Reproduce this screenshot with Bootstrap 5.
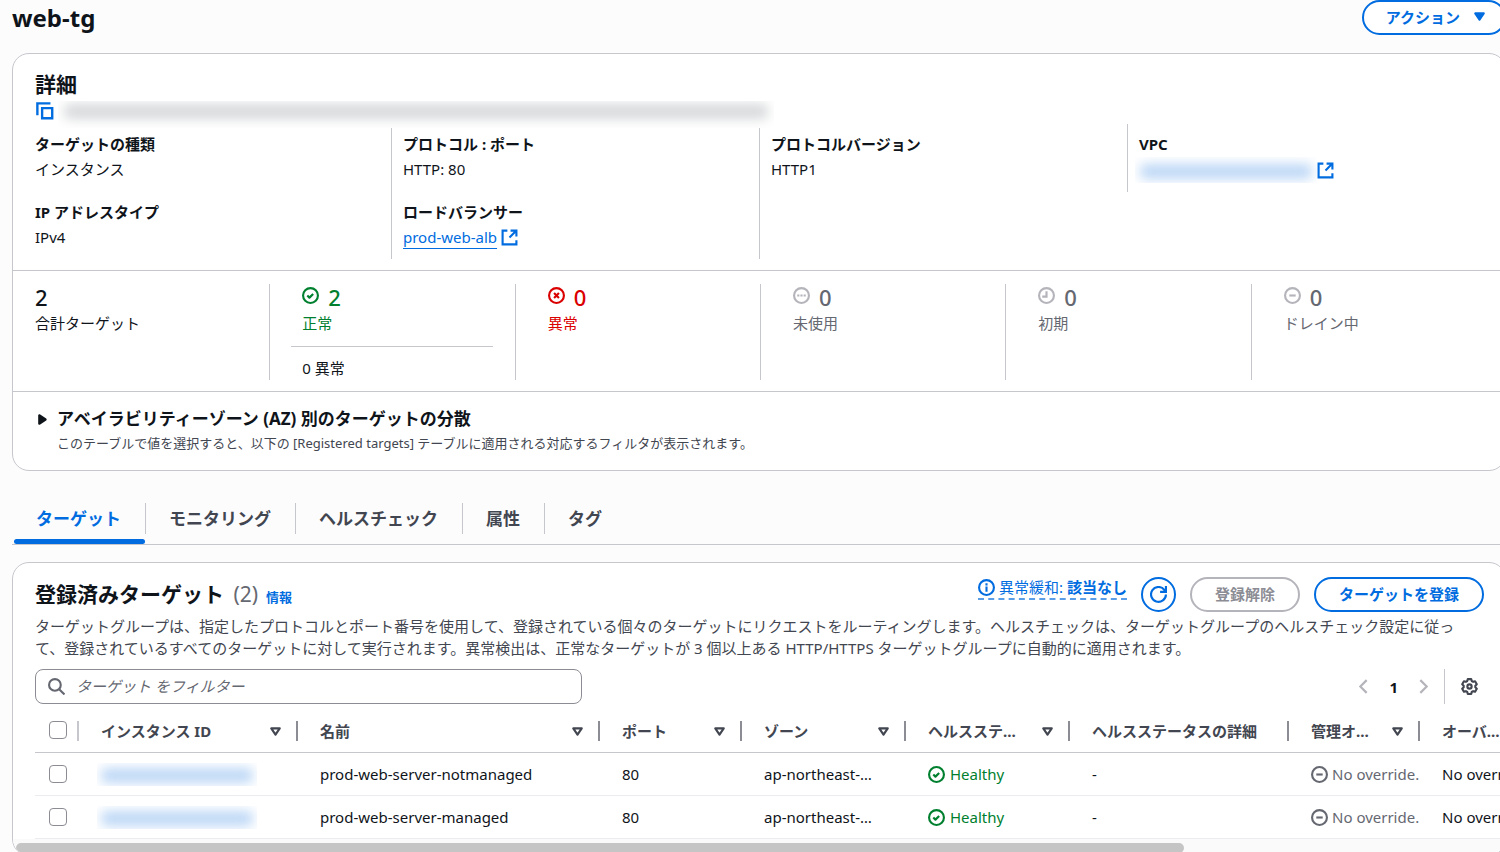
<!DOCTYPE html>
<html lang="ja">
<head>
<meta charset="utf-8">
<meta name="viewport" content="width=device-width, initial-scale=1">
<title>web-tg</title>
<link href="https://cdn.jsdelivr.net/npm/bootstrap@5.3.0/dist/css/bootstrap.min.css" rel="stylesheet">
<style>
:root{--ink:#0f141a;--soft:#424650;--mute:#656871;--blue:#006ce0;--green:#00802f;--red:#db0000;--line:#c6c6cd;--pale:#b4b4bb}
body{font-family:"Noto Sans","Noto Sans CJK JP",sans-serif;font-size:15px;line-height:22px;color:var(--ink);background:#fcfcfd;overflow:hidden;height:100vh}
.page-main{padding-left:12px;margin-right:-6px}
h1{font-size:24px;line-height:35px;font-weight:700}
h2{font-size:21px;line-height:26px;font-weight:700}
h3{font-size:17px;line-height:24px;font-weight:700}
a{color:var(--blue)}
.ico{width:17px;height:17px;flex:none;fill:none;stroke:currentColor;stroke-width:2;stroke-linejoin:round}
.solid{fill:currentColor}
.copy{width:19px;height:19px}
.panel{background:#fff;border:1px solid var(--line);border-radius:17px}
.pill{height:35px;border:2px solid var(--blue);border-radius:18px;color:var(--blue);background:#fff;font-size:15px;line-height:22px;font-weight:700;padding:0 23px 2px}
.pill:disabled{border-color:var(--pale);color:#8c8c94;background:#fff;opacity:1}
.pill.round{width:35px;padding:0}
.pill.menu{padding:0 16px 2px 22px;gap:11px}
.page-head{margin-bottom:18px}
.panel-top{padding:17px 22px 0}
.arn{height:23px;margin-top:4px}
.plain{border:0;background:none;padding:0;color:var(--blue);line-height:1}
.hazy{position:relative;z-index:1;overflow:hidden;background:#fff}
.hazy::before{content:"";display:block;height:15px;border-radius:5px;background:#d6d8da;filter:blur(6px)}
.hazy.tint::before{background:#bcd7f6}
.arn .hazy{width:716px;height:27px;padding:3px 6px}
.vpc-id{width:182px;height:26px;padding:7px 5px 0;margin-left:-4px}
.facts{padding:0 10px 11px 10px;border-bottom:1px solid var(--line)}
.facts .cell{padding:8px 11px 9px}
.facts .cell:first-child{padding-left:12px}
.facts .cell + .cell{border-left:1px solid var(--line)}
.facts dl{margin:0}
.facts dl + dl{margin-top:18px}
.facts dt,.facts dd{line-height:25px;margin:0}
.facts a{text-underline-offset:5px}
.stats{padding:13px 9px 11px 11px;border-bottom:1px solid var(--line)}
.stats .cell{padding-left:32px;min-height:96px;border-left:1px solid var(--line)}
.stats .cell:first-child{border:0;padding-left:11px}
.stats .num{font-size:22px;line-height:26px;padding-bottom:2px;font-weight:500;gap:9px}
.stats .num .ico{margin-top:3px}
.stats .lab{line-height:23px}
.stats .more{margin:11px 22px 0 -11px;padding:10px 11px 0;border-top:1px solid var(--line)}
.green{color:var(--green)}.red{color:var(--red)}.mute{color:var(--mute)}.soft{color:var(--soft)}
.pale{color:var(--pale)}
.zones{padding:15px 22px 17px}
.zones h3{gap:5px}
.zones p{font-size:13px;line-height:20px;margin:2px 0 0 22px}
.tabs{margin-top:32px;border-bottom:1px solid var(--line)}
.tabs li{height:31px;margin-bottom:10px;padding:0 24px;position:relative}
.tabs li + li{border-left:1px solid var(--line);padding-left:23px}
.tabs a{font-size:17px;line-height:31px;font-weight:700;color:var(--soft);text-decoration:none}
.tabs a.active{color:var(--blue)}
.tabs .on::after{content:"";position:absolute;left:2px;right:0;bottom:-10px;height:5px;border-radius:3px;background:var(--blue)}
.targets{margin-top:17px;overflow:hidden}
.targets-head{padding:14px 21px 0 22px}
.actions{gap:14px}
.info{font-size:13px;line-height:18px;font-weight:700;text-decoration:none}
.dash{border-bottom:2px dashed #5a9ee8;text-decoration:none;line-height:21px}
.intro{margin:3px 28px 10px 22px}
.tools{padding:0 11px 0 22px;height:35px}
.finder{width:547px}
.finder .ico{position:absolute;left:13px;top:9px;color:var(--mute)}
.finder input{height:35px;border:1px solid #8c8c94;border-radius:8px;padding:0 12px 2px 40px;font-size:15px;color:var(--ink)}
.finder input::placeholder{font-style:italic;color:var(--mute)}
.page-no{padding:0 17px}
.gearbox{border-left:1px solid var(--line);padding:0 16px}
.grid-wrap{padding-left:22px;overflow:hidden}
.grid{table-layout:fixed;width:1520px;border-collapse:separate;border-spacing:0;margin:0}
.grid th{height:49px;padding:6px 0 0;border-bottom:1px solid var(--line);color:var(--soft);font-weight:700;vertical-align:middle}
.grid th > div{height:20px;line-height:20px;border-right:2px solid #8c8c94;padding:0 12px 0 22px;gap:11px}
.grid th:first-child > div{border-color:var(--line)}
.grid td{height:43px;padding:0 32px 0 22px;border-bottom:1px solid #ebebf0;white-space:nowrap}
.grid .pick,.grid th > .pick{padding:0 0 0 14px}
.grid .wide{padding-right:0}
.grid .state{gap:5px}
.grid .form-check-input{width:18px;height:18px;margin:0;border:1px solid #8c8c94;border-radius:4px;display:block}
.grid .hazy{width:160px;height:23px;padding:5px 4px 0;margin-left:-4px}
.bar-track{height:16px;padding:4px 0 0 3px;background:#fafafa}
.bar-thumb{width:1168px;max-width:79%;height:10px;border-radius:5px;background:#c5c5c5}
</style>
</head>
<body>
<svg class="d-none" aria-hidden="true">
<symbol id="ok" viewBox="0 0 16 16"><circle cx="8" cy="8" r="7"/><path d="m5 8 2 2 3.5-3.5"/></symbol>
<symbol id="bad" viewBox="0 0 16 16"><circle cx="8" cy="8" r="7"/><path d="m5.7 5.7 4.6 4.6M10.3 5.7l-4.6 4.6"/></symbol>
<symbol id="dots" viewBox="0 0 16 16"><circle cx="8" cy="8" r="7"/><path d="M4 8h2M7 8h2M10 8h2"/></symbol>
<symbol id="clock" viewBox="0 0 16 16"><circle cx="8" cy="8" r="7"/><path d="M8 4v5H4" stroke-linejoin="miter"/></symbol>
<symbol id="minus" viewBox="0 0 16 16"><circle cx="8" cy="8" r="7"/><path d="M5 8h6"/></symbol>
<symbol id="about" viewBox="0 0 16 16"><circle cx="8" cy="8" r="7"/><path d="M8 7v5M8 4v2"/></symbol>
<symbol id="out" viewBox="0 0 16 16"><path stroke-linejoin="miter" d="M9 1.500h5.500V7M14.500 1.500 8 8M14.500 10.500v4h-13v-13H6"/></symbol>
<symbol id="down" viewBox="0 0 16 16"><path d="M4 5h8l-4 6z"/></symbol>
</svg>
<main class="page-main">
  <header class="page-head d-flex justify-content-between">
    <h1 class="m-0">web-tg</h1>
    <button class="pill menu d-flex align-items-center" type="button">アクション <svg class="ico solid"><use href="#down"/></svg></button>
  </header>

  <section class="panel">
    <div class="panel-top">
      <h2 class="m-0">詳細</h2>
      <div class="arn d-flex gap-1">
        <button class="plain align-self-start" type="button" aria-label="ARN をコピー"><svg class="ico copy" viewBox="0 0 16 16"><path stroke-linejoin="miter" d="M2 12V2h11M6 6h8.500v8.500H6z"/></svg></button>
        <div class="hazy"></div>
      </div>
    </div>
    <div class="facts">
      <div class="row g-0 align-items-start">
        <div class="col-3 cell">
          <dl><dt>ターゲットの種類</dt><dd>インスタンス</dd></dl>
          <dl><dt>IP アドレスタイプ</dt><dd>IPv4</dd></dl>
        </div>
        <div class="col-3 cell">
          <dl><dt>プロトコル : ポート</dt><dd>HTTP: 80</dd></dl>
          <dl><dt>ロードバランサー</dt><dd class="d-flex align-items-center gap-1"><a href="#">prod-web-alb</a><a href="#" class="d-flex" aria-label="新しいタブで開く"><svg class="ico"><use href="#out"/></svg></a></dd></dl>
        </div>
        <div class="col-3 cell align-self-stretch">
          <dl><dt>プロトコルバージョン</dt><dd>HTTP1</dd></dl>
        </div>
        <div class="col-3 cell">
          <dl><dt>VPC</dt><dd class="d-flex align-items-center"><div class="hazy tint vpc-id"></div><a href="#" class="d-flex" aria-label="VPC を開く"><svg class="ico"><use href="#out"/></svg></a></dd></dl>
        </div>
      </div>
    </div>
    <div class="stats">
      <div class="row g-0">
        <div class="col-2 cell"><div class="num">2</div><div class="lab">合計ターゲット</div></div>
        <div class="col-2 cell">
          <div class="green"><div class="num d-flex"><svg class="ico"><use href="#ok"/></svg>2</div><div class="lab">正常</div></div>
          <div class="more">0 異常</div>
        </div>
        <div class="col-2 cell red"><div class="num d-flex"><svg class="ico"><use href="#bad"/></svg>0</div><div class="lab">異常</div></div>
        <div class="col-2 cell mute"><div class="num d-flex"><svg class="ico pale"><use href="#dots"/></svg>0</div><div class="lab">未使用</div></div>
        <div class="col-2 cell mute"><div class="num d-flex"><svg class="ico pale"><use href="#clock"/></svg>0</div><div class="lab">初期</div></div>
        <div class="col-2 cell mute"><div class="num d-flex"><svg class="ico pale"><use href="#minus"/></svg>0</div><div class="lab">ドレイン中</div></div>
      </div>
    </div>
    <div class="zones">
      <h3 class="m-0 d-flex align-items-center"><button class="plain text-reset d-flex" type="button" aria-label="展開"><svg class="ico solid" viewBox="0 0 16 16"><path d="M4 4v8l6-4z"/></svg></button>アベイラビリティーゾーン (AZ) 別のターゲットの分散</h3>
      <p class="soft">このテーブルで値を選択すると、以下の [Registered targets] テーブルに適用される対応するフィルタが表示されます。</p>
    </div>
  </section>

  <nav>
    <ul class="tabs list-unstyled d-flex mb-0">
      <li class="on"><a class="active" href="#">ターゲット</a></li>
      <li><a href="#">モニタリング</a></li>
      <li><a href="#">ヘルスチェック</a></li>
      <li><a href="#">属性</a></li>
      <li><a href="#">タグ</a></li>
    </ul>
  </nav>

  <section class="panel targets">
    <div class="targets-head d-flex align-items-start">
      <h2 class="mb-0 mt-1">登録済みターゲット <span class="fw-normal mute ms-1">(2)</span></h2>
      <a class="info align-self-center mt-1 ms-2" href="#">情報</a>
      <div class="actions d-flex ms-auto align-items-start">
        <a class="dash d-flex align-items-center gap-1" href="#"><svg class="ico"><use href="#about"/></svg><span>異常緩和: <b>該当なし</b></span></a>
        <button class="pill round d-flex align-items-center justify-content-center" type="button" aria-label="更新"><svg class="ico" viewBox="0 0 16 16"><path stroke-linejoin="miter" d="M15 8a7 7 0 1 1-1.5-4.400L14.400 5M15 0v5.500H9.500"/></svg></button>
        <button class="pill" type="button" disabled>登録解除</button>
        <button class="pill" type="button">ターゲットを登録</button>
      </div>
    </div>
    <p class="intro soft">ターゲットグループは、指定したプロトコルとポート番号を使用して、登録されている個々のターゲットにリクエストをルーティングします。ヘルスチェックは、ターゲットグループのヘルスチェック設定に従って、登録されているすべてのターゲットに対して実行されます。異常検出は、正常なターゲットが 3 個以上ある HTTP/HTTPS ターゲットグループに自動的に適用されます。</p>
    <div class="tools d-flex justify-content-between">
      <div class="finder position-relative">
        <svg class="ico" viewBox="0 0 16 16"><circle cx="6.500" cy="6.500" r="5.500"/><path d="m10.500 10.500 5 5"/></svg>
        <input class="form-control" type="text" aria-label="ターゲット をフィルター" placeholder="ターゲット をフィルター">
      </div>
      <div class="d-flex align-items-center">
        <button class="plain pale" type="button" aria-label="前のページ"><svg class="ico" viewBox="0 0 16 16"><path stroke-linejoin="miter" d="M11 2 5 8l6 6"/></svg></button>
        <b class="page-no">1</b>
        <button class="plain pale me-2 pe-1" type="button" aria-label="次のページ"><svg class="ico" viewBox="0 0 16 16"><path stroke-linejoin="miter" d="m5 2 6 6-6 6"/></svg></button>
        <div class="gearbox d-flex align-items-center h-100"><button class="plain soft" type="button" aria-label="設定"><svg class="ico" viewBox="0 0 16 16"><path d="M6.400 1h3.200l.5 1.800 1.350.8 1.800-.5 1.600 2.800-1.350 1.350v1.500l1.350 1.350-1.600 2.800-1.800-.5-1.350.8-.5 1.800H6.400l-.5-1.800-1.350-.8-1.800.5-1.600-2.800L2.500 8.750v-1.500L1.150 5.900l1.600-2.800 1.800.5 1.350-.8z"/><circle cx="8" cy="8" r="2"/></svg></button></div>
      </div>
    </div>
    <div class="grid-wrap">
      <table class="grid">
        <colgroup><col style="width:44px"><col style="width:219px"><col style="width:302px"><col style="width:142px"><col style="width:164px"><col style="width:164px"><col style="width:219px"><col style="width:131px"><col style="width:135px"></colgroup>
        <thead><tr>
          <th><div class="pick"><input class="form-check-input" type="checkbox" aria-label="すべて選択"></div></th>
          <th><div class="d-flex align-items-center justify-content-between"><span class="text-truncate">インスタンス ID</span><svg class="ico"><use href="#down"/></svg></div></th>
          <th><div class="d-flex align-items-center justify-content-between"><span class="text-truncate">名前</span><svg class="ico"><use href="#down"/></svg></div></th>
          <th><div class="d-flex align-items-center justify-content-between"><span class="text-truncate">ポート</span><svg class="ico"><use href="#down"/></svg></div></th>
          <th><div class="d-flex align-items-center justify-content-between"><span class="text-truncate">ゾーン</span><svg class="ico"><use href="#down"/></svg></div></th>
          <th><div class="d-flex align-items-center justify-content-between"><span class="text-truncate">ヘルスステータス</span><svg class="ico"><use href="#down"/></svg></div></th>
          <th><div class="d-flex align-items-center"><span class="text-truncate">ヘルスステータスの詳細</span></div></th>
          <th><div class="d-flex align-items-center justify-content-between"><span class="text-truncate">管理オーバーライド</span><svg class="ico"><use href="#down"/></svg></div></th>
          <th><div class="d-flex align-items-center justify-content-between"><span class="text-truncate">オーバーライドの詳細</span><svg class="ico"><use href="#down"/></svg></div></th>
        </tr></thead>
        <tbody>
          <tr>
            <td class="pick"><input class="form-check-input" type="checkbox" aria-label="prod-web-server-notmanaged を選択"></td>
            <td><div class="hazy tint"></div></td><td>prod-web-server-notmanaged</td><td>80</td><td class="text-truncate">ap-northeast-1a</td>
            <td><div class="state d-flex align-items-center green"><svg class="ico"><use href="#ok"/></svg>Healthy</div></td><td>-</td>
            <td class="wide"><div class="d-flex align-items-center gap-1 mute"><svg class="ico"><use href="#minus"/></svg>No override.</div></td><td class="wide">No override.</td>
          </tr>
          <tr>
            <td class="pick"><input class="form-check-input" type="checkbox" aria-label="prod-web-server-managed を選択"></td>
            <td><div class="hazy tint"></div></td><td>prod-web-server-managed</td><td>80</td><td class="text-truncate">ap-northeast-1a</td>
            <td><div class="state d-flex align-items-center green"><svg class="ico"><use href="#ok"/></svg>Healthy</div></td><td>-</td>
            <td class="wide"><div class="d-flex align-items-center gap-1 mute"><svg class="ico"><use href="#minus"/></svg>No override.</div></td><td class="wide">No override.</td>
          </tr>
        </tbody>
      </table>
    </div>
    <div class="bar-track"><div class="bar-thumb"></div></div>
  </section>
</main>
<script src="https://cdn.jsdelivr.net/npm/bootstrap@5.3.0/dist/js/bootstrap.bundle.min.js"></script>
</body>
</html>
